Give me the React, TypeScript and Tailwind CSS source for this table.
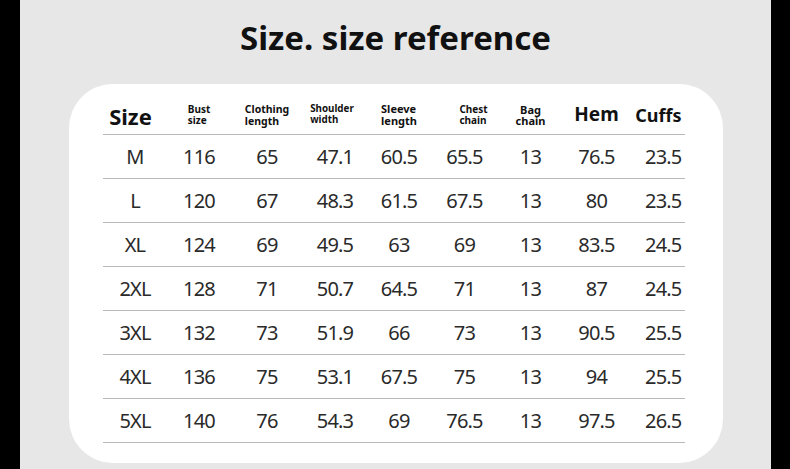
import React from "react";

type Col = {
  width: string;
  head: React.ReactNode;
  headClass?: string;
  cellClass?: string;
};

const cols: Col[] = [
  { width: "w-[63px]", head: <span className="pr-[7px] pt-[3px] text-[22px] font-bold leading-none">Size</span>, cellClass: "pl-[2px]" },
  { width: "w-[67px]", head: <span className="text-[10px] font-bold leading-[11px]">Bust<br />size</span> },
  { width: "w-[69px]", head: <span className="text-[10.5px] font-bold leading-[12px]">Clothing<br />length</span> },
  { width: "w-[65px]", head: <span className="pr-[4px] text-[9.8px] font-bold leading-[10.5px]">Shoulder<br />width</span>, cellClass: "pl-[2px]" },
  { width: "w-[65px]", head: <span className="text-[11px] font-bold leading-[12px]">Sleeve<br />length</span> },
  { width: "w-[66px]", head: <span className="pl-[18px] text-[10px] font-bold leading-[11px]">Chest<br />chain</span> },
  { width: "w-[66px]", head: <span className="text-center text-[11px] font-bold leading-[11px]">Bag<br />chain</span> },
  { width: "w-[66px]", head: <span className="text-[19px] font-bold leading-none">Hem</span> },
  { width: "w-[55px]", head: <span className="pr-[3px] text-[18px] font-bold leading-none">Cuffs</span>, headClass: "justify-end", cellClass: "justify-end pr-[3px]" },
];

const rows: string[][] = [
  ["M", "116", "65", "47.1", "60.5", "65.5", "13", "76.5", "23.5"],
  ["L", "120", "67", "48.3", "61.5", "67.5", "13", "80", "23.5"],
  ["XL", "124", "69", "49.5", "63", "69", "13", "83.5", "24.5"],
  ["2XL", "128", "71", "50.7", "64.5", "71", "13", "87", "24.5"],
  ["3XL", "132", "73", "51.9", "66", "73", "13", "90.5", "25.5"],
  ["4XL", "136", "75", "53.1", "67.5", "75", "13", "94", "25.5"],
  ["5XL", "140", "76", "54.3", "69", "76.5", "13", "97.5", "26.5"],
];

export default function App() {
  return (
    <div className="flex h-[469px] w-[790px] bg-black font-['Noto_Sans',sans-serif]">
      <div className="ml-[20px] flex h-full w-[751px] flex-col items-center bg-[#e7e7e7]">
        {/* title */}
        <div className="h-[84px] pt-[21px]">
          <h1 className="text-[33px] font-bold leading-[33px] text-[#111]">Size. size reference</h1>
        </div>

        {/* card */}
        <div className="h-[379px] w-[654px] rounded-[44px] bg-white pl-[34px] pt-[11px]">
          <div className="w-[582px]">
            <div className="flex h-[40px] border-b-[1.5px] border-[#b9b9b9] text-[#111]">
              {cols.map((c, i) => (
                <div key={i} className={`flex items-center justify-center ${c.width} ${c.headClass ?? ""}`}>
                  {c.head}
                </div>
              ))}
            </div>
            {rows.map((r, ri) => (
              <div key={ri} className="flex h-[44px] border-b-[1.5px] border-[#b9b9b9] text-[#2a2a2a]">
                {r.map((v, i) => (
                  <div
                    key={i}
                    className={`flex items-center justify-center text-[20px] leading-none tracking-[-0.8px] ${cols[i].width} ${cols[i].cellClass ?? ""}`}
                  >
                    {v}
                  </div>
                ))}
              </div>
            ))}
          </div>
        </div>
      </div>
    </div>
  );
}
